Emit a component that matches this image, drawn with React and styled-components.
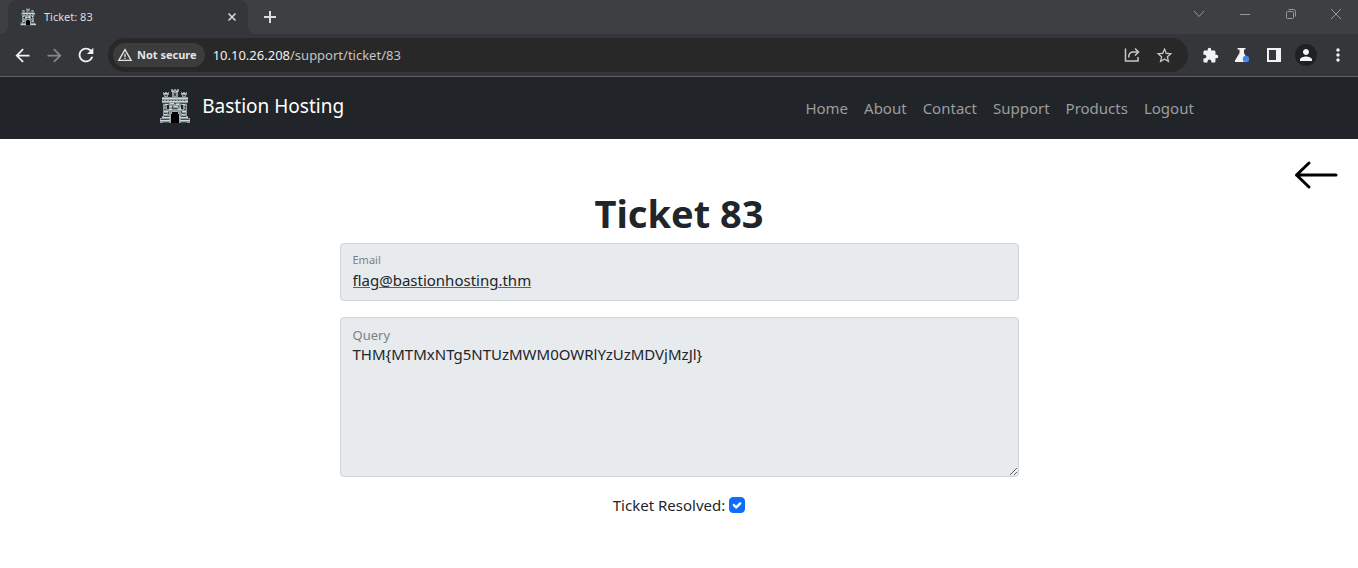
import styled, { createGlobalStyle } from "styled-components";
import {
    MdArrowBack, MdArrowForward, MdRefresh, MdStarBorder,
    MdExtension, MdPerson, MdMoreVert, MdWarningAmber
} from "react-icons/md";

const links = ["Home", "About", "Contact", "Support", "Products", "Logout"];

export default function App() {
    return (
        <>
            <GlobalStyle />
            <TabStrip />
            <Toolbar />
            <SiteNav />
            <Ticket />
        </>
    );
}

function TabStrip() {
    return (
        <TabStripStyled>
            <Tab>
                <Castle width="16" height="18" />
                <TabTitle>Ticket: 83</TabTitle>
                <PlainButton $size={16} aria-label="Close tab">
                    <svg width="8" height="8" viewBox="0 0 8 8" stroke="#dadce0" strokeWidth="1.5">
                        <path d="M.5.5l7 7M7.5.5l-7 7" />
                    </svg>
                </PlainButton>
            </Tab>
            <PlainButton $size={28} aria-label="New tab">
                <svg width="12" height="12" viewBox="0 0 12 12" stroke="#dadce0" strokeWidth="2">
                    <path d="M6 0v12M0 6h12" />
                </svg>
            </PlainButton>
            <WindowButtons>
                <WindowButton aria-label="Search tabs">
                    <svg width="12" height="12" viewBox="0 0 12 12"><path d="M1 3l5 5.500 5-5.500" /></svg>
                </WindowButton>
                <WindowButton aria-label="Minimize">
                    <svg width="12" height="12" viewBox="0 0 12 12"><path d="M1 6.500h10" /></svg>
                </WindowButton>
                <WindowButton aria-label="Restore">
                    <svg width="12" height="12" viewBox="0 0 12 12">
                        <rect x="1.500" y="3.500" width="7" height="7" rx="1" />
                        <path d="M3.500 1.500h5a2 2 0 0 1 2 2v5" />
                    </svg>
                </WindowButton>
                <WindowButton aria-label="Close">
                    <svg width="12" height="12" viewBox="0 0 12 12"><path d="M1 1l10 10M11 1L1 11" /></svg>
                </WindowButton>
            </WindowButtons>
        </TabStripStyled>
    );
}

function Toolbar() {
    return (
        <ToolbarStyled>
            <PlainButton $size={32} aria-label="Back"><MdArrowBack size={21} /></PlainButton>
            <PlainButton $size={32} $color="#86878a" aria-label="Forward"><MdArrowForward size={21} /></PlainButton>
            <PlainButton $size={32} aria-label="Reload"><MdRefresh size={22} /></PlainButton>
            <AddressBar>
                <SecurityChip><MdWarningAmber size={16} />Not secure</SecurityChip>
                <Url><span>10.10.26.208</span>/support/ticket/83</Url>
                <PlainButton $size={32} $color="#c7c8ca" aria-label="Share">
                    <svg width="16" height="16" viewBox="0 0 16 16" fill="none" stroke="currentColor" strokeWidth="1.500">
                        <path d="M1.500 1.500v12.500h12.500v-4" />
                        <path d="M4.800 10.500V9a4 4 0 0 1 4-4H14" />
                        <path d="M11 1.500L14.500 5 11 8.500" />
                    </svg>
                </PlainButton>
                <PlainButton $size={32} $color="#c7c8ca" aria-label="Bookmark"><MdStarBorder size={19} /></PlainButton>
            </AddressBar>
            <PlainButton $size={32} aria-label="Extensions"><MdExtension size={17} /></PlainButton>
            <PlainButton $size={32} aria-label="Labs">
                <svg width="16" height="16" viewBox="0 0 16 16">
                    <path d="M3.500 1h8v1.500H10V6l4 7.500c.5 1-.1 1.500-1 1.500H2c-1 0-1.500-.6-1-1.500L5.500 6V2.500h-2z" fill="#f1f3f4" />
                    <circle cx="12" cy="12" r="3.200" fill="#4285f4" />
                </svg>
            </PlainButton>
            <PlainButton $size={32} aria-label="Side panel">
                <svg width="14" height="14" viewBox="0 0 14 14" fill="#f1f3f4">
                    <path fillRule="evenodd" d="M0 0h14v14H0zM2 2v10h7V2z" />
                </svg>
            </PlainButton>
            <PlainButton $size={32} aria-label="Profile"><Avatar><MdPerson size={18} /></Avatar></PlainButton>
            <PlainButton $size={32} aria-label="Menu"><MdMoreVert size={20} /></PlainButton>
        </ToolbarStyled>
    );
}

function SiteNav() {
    return (
        <NavStyled>
            <NavContainer>
                <Brand href="#">
                    <Castle width="30" height="36" />
                    Bastion Hosting
                </Brand>
                <NavLinks>
                    {links.map((link) => (
                        <a key={link} href="#">{link}</a>
                    ))}
                </NavLinks>
            </NavContainer>
        </NavStyled>
    );
}

function Ticket() {
    return (
        <main>
            <BackRow>
                <a href="#" aria-label="Back to tickets">
                    <svg width="44" height="32" viewBox="0 0 44 32" fill="none" stroke="#000" strokeWidth="3" strokeLinecap="round" strokeLinejoin="round">
                        <path d="M2.500 16H42M15 4L2.500 16 15 28" />
                    </svg>
                </a>
            </BackRow>
            <Form>
                <h1>Ticket 83</h1>
                <Field>
                    <Label htmlFor="email">Email</Label>
                    <EmailInput id="email" type="email" value="flag@bastionhosting.thm" readOnly />
                </Field>
                <Field>
                    <Label htmlFor="query" $large>Query</Label>
                    <QueryInput id="query" value="THM{MTMxNTg5NTUzMWM0OWRlYzUzMDVjMzJl}" readOnly spellCheck={false} />
                </Field>
                <Resolved>
                    <label htmlFor="resolved">Ticket Resolved:</label>
                    <CheckWrap>
                        <input id="resolved" type="checkbox" defaultChecked />
                        <svg width="16" height="16" viewBox="0 0 20 20" fill="none" stroke="#fff" strokeWidth="3" strokeLinecap="round" strokeLinejoin="round">
                            <path d="M6 10l3 3 5-5" />
                        </svg>
                    </CheckWrap>
                </Resolved>
            </Form>
        </main>
    );
}

function Castle({ width, height }) {
    return (
        <svg width={width} height={height} viewBox="0 0 30 36" aria-hidden="true">
            <g fill="#8f9a9e">
                <path d="M3 4h1v1h1V4h2v1h1V4h1v3H8v2H4V7H3z" />
                <path d="M21 4h1v1h1V4h2v1h1V4h1v3h-1v2h-4V7h-1z" />
                <path d="M11 1h2v1h1V1h2v1h1V1h2v3h-1v5h-6V4h-1z" />
                <path d="M2 9h26v6h-1v13h1v2h2v5H0v-5h2v-2h1V15H2z" />
            </g>
            <g fill="#ccd5d8" shapeRendering="crispEdges">
                <path d="M2 10h26v1H2zM2 13h26v1H2zM2 29h8v1H2zM20 29h8v1h-8zM0 32h10v1H0zM20 32h10v1H20z" />
                <path d="M5 16h3v1H5zM10 15h4v1h-4zM16 16h3v1h-3zM22 16h3v1h-3zM9 18h3v1H9zM14 18h4v1h-4zM20 19h1v2h-1zM4 23h4v1H4zM9 21h3v1H9zM18 21h3v1h-3zM22 23h4v1h-4zM4 26h3v1H4zM22 26h3v1h-3z" />
                <path d="M4 5h4v1H4zM22 5h4v1h-4zM12 3h2v1h-2zM16 3h2v1h-2z" />
            </g>
            {/* mortar and shadow between the stones */}
            <g fill="#454d51" shapeRendering="crispEdges">
                <path d="M3 12h1v1H3zM6 12h1v1H6zM9 12h1v1H9zM12 12h1v1h-1zM15 12h1v1h-1zM18 12h1v1h-1zM21 12h1v1h-1zM24 12h1v1h-1z" />
                <path d="M3 15h6v1H3zM14 15h2v1h-2zM20 15h7v1h-7zM5 18h1v1H5zM12 18h1v2h-1zM18 18h1v1h-1zM25 18h1v2h-1zM4 21h2v1H4zM12 20h3v1h-3zM15 20h2v1h-2zM24 21h2v1h-2z" />
                <path d="M4 25h3v1H4zM8 24h1v2H8zM22 25h3v1h-3zM21 23h1v2h-1zM4 28h5v1H4zM21 28h5v1h-5zM1 31h8v1H1zM21 31h8v1h-8zM3 34h6v1H3zM21 34h6v1h-6z" />
                <path d="M5 7h2v1H5zM23 7h2v1h-2zM14 5h2v3h-2z" />
            </g>
            <path d="M7 17h2v4H7zM21 17h2v4h-2z" fill="#1d2124" />
            <path d="M10 26h1v-2h2v-1h4v1h2v2h1v9H10z" fill="#a4afb2" />
            <path d="M11 35v-9h1v-2h6v2h1v9z" fill="#000" />
        </svg>
    );
}

const GlobalStyle = createGlobalStyle`
* {
    box-sizing: border-box;
}
body {
    margin: 0;
    background-color: #ffffff;
    color: #212529;
    font-family: "Noto Sans", "Open Sans", sans-serif;
    font-size: 15px;
    line-height: 24px;
}
a {
    text-decoration: none;
}
`

const PlainButton = styled.button`
    width: ${(props) => props.$size}px;
    height: ${(props) => props.$size}px;
    padding: 0;
    border: none;
    background: none;
    color: ${(props) => props.$color || "#f1f3f4"};

    display: flex;
    align-items: center;
    justify-content: center;
    flex-shrink: 0;
`

const TabStripStyled = styled.div`
    height: 34px;
    padding-left: 8px;
    background-color: #3c4043;

    display: flex;
    align-items: center;
`

const Tab = styled.div`
    width: 240px;
    height: 34px;
    margin-right: 8px;
    padding: 0 8px 0 12px;
    border-radius: 8px 8px 0 0;
    background-color: #35363a;

    display: flex;
    align-items: center;
    gap: 8px;
    position: relative;

/* flared feet of the active tab */
&::before, &::after {
    content: "";
    width: 8px;
    height: 8px;
    position: absolute;
    bottom: 0;
}
&::before {
    left: -8px;
    background: radial-gradient(circle at 0 0, transparent 8px, #35363a 8px);
}
&::after {
    right: -8px;
    background: radial-gradient(circle at 100% 0, transparent 8px, #35363a 8px);
}
`

const TabTitle = styled.span`
    flex: 1;
    font-size: 11px;
    color: #dadce0;
`

const WindowButtons = styled.div`
    margin-left: auto;
    display: flex;
`

const WindowButton = styled.button`
    width: 46px;
    height: 28px;
    margin-bottom: 6px;
    padding: 0;
    border: none;
    background: none;

    display: flex;
    align-items: center;
    justify-content: center;

svg {
    fill: none;
    stroke: #96999b;
    stroke-width: 1;
}
&:last-child {
    width: 44px;
}
`

const ToolbarStyled = styled.div`
    height: 43px;
    padding: 0 4px 0 6px;
    border-bottom: 1px solid #5f6165;
    background-color: #35363a;

    display: flex;
    align-items: center;
`

const AddressBar = styled.div`
    height: 34px;
    margin: 0 6px;
    padding: 0 8px 0 5px;
    border-radius: 17px;
    background-color: #282828;

    display: flex;
    align-items: center;
    flex: 1;
`

const SecurityChip = styled.div`
    height: 24px;
    padding: 0 8px 0 4px;
    border-radius: 12px;
    background-color: #3c3c3c;
    color: #e3e3e3;
    font-size: 11px;
    font-weight: 700;

    display: flex;
    align-items: center;
    gap: 4px;
`

const Url = styled.div`
    margin-left: 8px;
    flex: 1;
    font-size: 13px;
    color: #c4c4c4;

span {
    color: #f1f1f1;
}
`

const Avatar = styled.span`
    width: 22px;
    height: 22px;
    border-radius: 50%;
    background-color: #202124;

    display: flex;
    align-items: center;
    justify-content: center;
`

const NavStyled = styled.nav`
    padding: 8px 0;
    background-color: #212529;
`

const NavContainer = styled.div`
    width: 77%;
    margin: 0 auto;
    padding: 0 4px;

    display: flex;
    align-items: center;
    justify-content: space-between;
`

const Brand = styled.a`
    height: 46px;
    padding-bottom: 4px;
    color: #ffffff;
    font-size: 19px;

    display: flex;
    align-items: center;
    gap: 12px;
`

const NavLinks = styled.div`
    padding-right: 4px;
    display: flex;
    gap: 16px;

a {
    color: #9b9d9e;
}
`

const BackRow = styled.div`
    height: 52px;
    padding: 20px 20px 0 0;

    display: flex;
    justify-content: flex-end;
`

const Form = styled.form`
    width: 50%;
    margin: 0 auto;

    display: flex;
    flex-direction: column;

h1 {
    margin: 0 0 8px 0;
    font-size: 38px;
    line-height: 44px;
    font-weight: 700;
    text-align: center;
}
`

const Field = styled.div`
    margin-bottom: 16px;
    padding-top: 8px;
    border: 1px solid #ced4da;
    border-radius: 4px;
    background-color: #e7ebee;

    display: flex;
    flex-direction: column;
`

const Label = styled.label`
    padding: 0 12px;
    font-size: ${(props) => (props.$large ? 13 : 11)}px;
    line-height: ${(props) => (props.$large ? 18 : 16)}px;
    color: #7b8084;
`

const EmailInput = styled.input`
    height: 32px;
    padding: 0 12px 8px 12px;
    border: none;
    outline: none;
    background: none;
    color: #212529;
    font: inherit;
    text-decoration: underline #0d6efd;
`

const QueryInput = styled.textarea`
    height: 132px;
    padding: 0 12px;
    border: none;
    outline: none;
    background: none;
    color: #212529;
    font: inherit;
    line-height: 20px;
    resize: vertical;
`

const Resolved = styled.div`
    display: flex;
    align-items: center;
    justify-content: center;
    gap: 4px;
`

const CheckWrap = styled.span`
    display: grid;

input, svg {
    grid-area: 1 / 1;
}
input {
    width: 16px;
    height: 16px;
    margin: 0;
    border-radius: 4px;
    border: 1px solid #adb5bd;
    appearance: none;
}
input:checked {
    border-color: #0d6efd;
    background-color: #0d6efd;
}
svg {
    pointer-events: none;
}
input:not(:checked) + svg {
    display: none;
}
`
